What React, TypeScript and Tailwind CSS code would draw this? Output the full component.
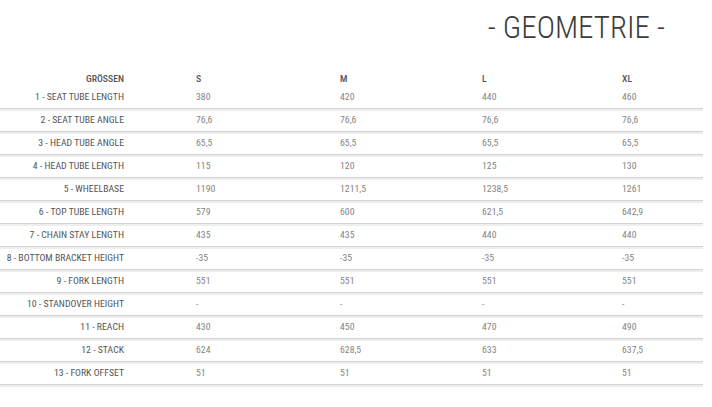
import React from "react";

const sizes = ["S", "M", "L", "XL"];

const rows: [string, string[]][] = [
  ["1 - SEAT TUBE LENGTH", ["380", "420", "440", "460"]],
  ["2 - SEAT TUBE ANGLE", ["76,6", "76,6", "76,6", "76,6"]],
  ["3 - HEAD TUBE ANGLE", ["65,5", "65,5", "65,5", "65,5"]],
  ["4 - HEAD TUBE LENGTH", ["115", "120", "125", "130"]],
  ["5 - WHEELBASE", ["1190", "1211,5", "1238,5", "1261"]],
  ["6 - TOP TUBE LENGTH", ["579", "600", "621,5", "642,9"]],
  ["7 - CHAIN STAY LENGTH", ["435", "435", "440", "440"]],
  ["8 - BOTTOM BRACKET HEIGHT", ["-35", "-35", "-35", "-35"]],
  ["9 - FORK LENGTH", ["551", "551", "551", "551"]],
  ["10 - STANDOVER HEIGHT", ["-", "-", "-", "-"]],
  ["11 - REACH", ["430", "450", "470", "490"]],
  ["12 - STACK", ["624", "628,5", "633", "637,5"]],
  ["13 - FORK OFFSET", ["51", "51", "51", "51"]],
];

const colW = ["w-[144px]", "w-[142px]", "w-[140px]", "flex-1"];

export default function App() {
  return (
    <div className="w-[712px] h-[407px] bg-white font-['Roboto',sans-serif] font-stretch-condensed">
      <div className="flex justify-end pr-[47px] pt-[10px] h-[69px]">
        <h1 className="text-[31px] font-light text-[#3c3c3c] leading-[36px]">- GEOMETRIE -</h1>
      </div>

      <div className="w-[703px] whitespace-nowrap">
        <div className="flex items-center h-[17px] pt-[3px] text-[9.75px] font-medium text-[#555]">
          <div className="w-[124px] text-right">GRÖSSEN</div>
          <div className="w-[72px]" />
          {sizes.map((s, i) => (
            <div key={s} className={colW[i]}>
              {s}
            </div>
          ))}
        </div>

        {rows.map(([label, vals]) => (
          <div
            key={label}
            className="flex items-center h-[23px] pt-[1px] border-b border-[#d4d4d4] shadow-[0_2px_0_#eeeeee] text-[9.75px]"
          >
            <div className="w-[124px] text-right text-[#555]">{label}</div>
            <div className="w-[72px]" />
            {vals.map((v, i) => (
              <div key={i} className={`${colW[i]} text-[#858585]`}>
                {v}
              </div>
            ))}
          </div>
        ))}
      </div>
    </div>
  );
}
